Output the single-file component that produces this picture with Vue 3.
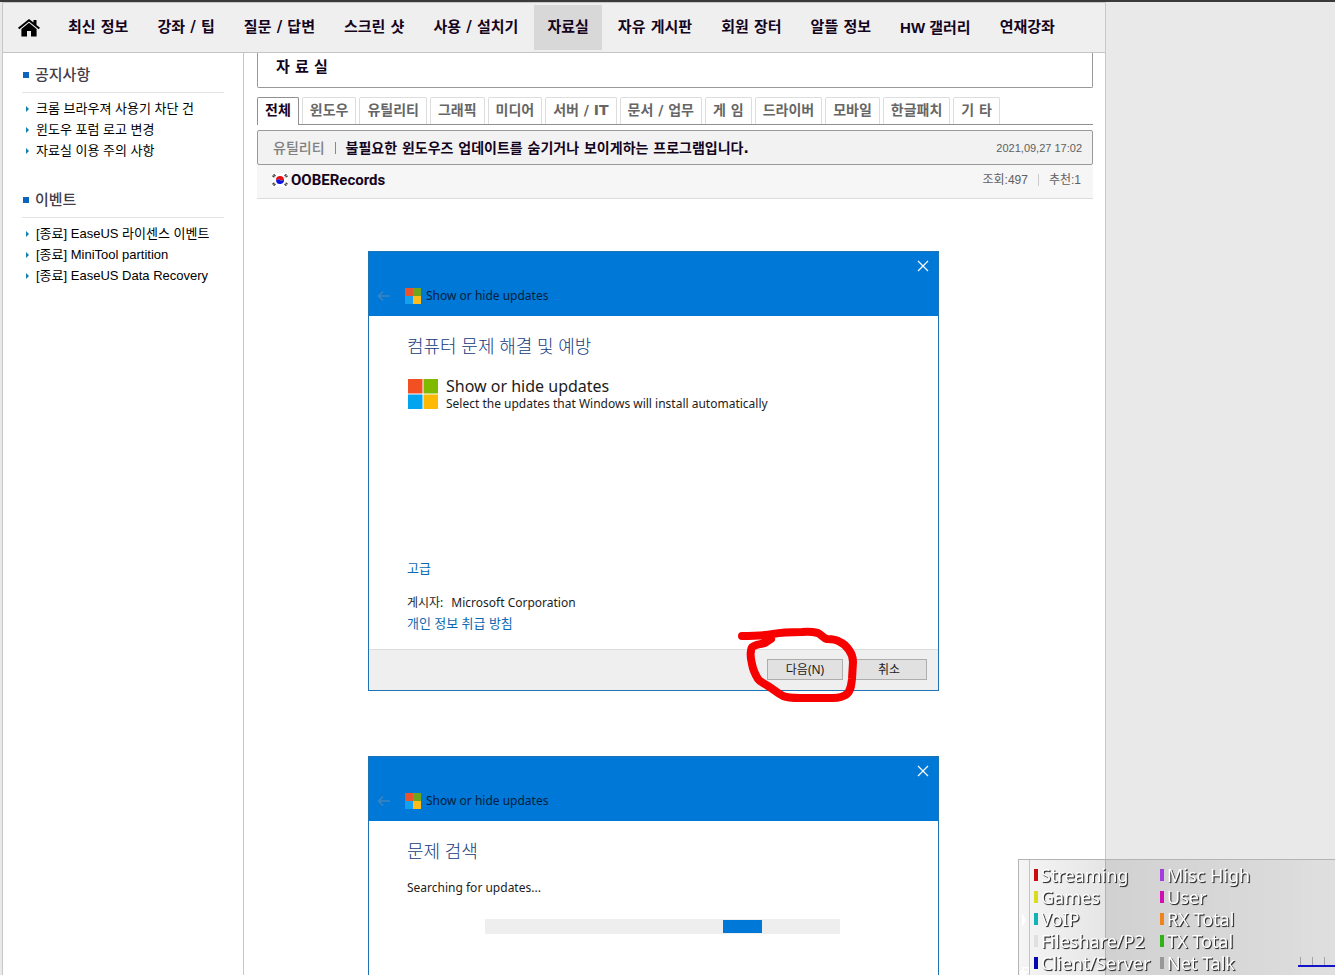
<script setup>
const navItems = [
  { label: '최신 정보' },
  { label: '강좌 / 팁' },
  { label: '질문 / 답변' },
  { label: '스크린 샷' },
  { label: '사용 / 설치기' },
  { label: '자료실', active: true },
  { label: '자유 게시판' },
  { label: '회원 장터' },
  { label: '알뜰 정보' },
  { label: 'HW 갤러리', latin: true },
  { label: '연재강좌' },
]

const sections = [
  {
    title: '공지사항',
    links: ['크롬 브라우져 사용기 차단 건', '윈도우 포럼 로고 변경', '자료실 이용 주의 사항'],
  },
  {
    title: '이벤트',
    links: ['[종료] EaseUS 라이센스 이벤트', '[종료] MiniTool partition', '[종료] EaseUS Data Recovery'],
  },
]

const tabs = [
  '전체', '윈도우', '유틸리티', '그래픽', '미디어', '서버 / IT',
  '문서 / 업무', '게 임', '드라이버', '모바일', '한글패치', '기 타',
]

const dialogs = [
  { id: 'intro', title: '컴퓨터 문제 해결 및 예방' },
  { id: 'search', title: '문제 검색' },
]

const legend = [
  { label: 'Streaming', color: '#cc0c0c' },
  { label: 'Games', color: '#d8dc1c' },
  { label: 'VoIP', color: '#10b4b4' },
  { label: 'Fileshare/P2', color: '#e0e0e0' },
  { label: 'Client/Server', color: '#0404b0' },
  { label: 'Misc High', color: '#a23cdc' },
  { label: 'User', color: '#d00cb4' },
  { label: 'RX Total', color: '#f0841c' },
  { label: 'TX Total', color: '#30b414' },
  { label: 'Net Talk', color: '#989898' },
]
</script>

<template>
  <div class="page">
    <div class="site">
      <header class="top">
        <a class="home" href="#" aria-label="홈">
          <svg width="22" height="18" viewBox="0 0 22 18">
            <path d="M11 0 L15.5 3.6 V1 H18.5 V6 L22 8.8 L20.7 10.3 L11 2.4 L1.3 10.3 L0 8.8 Z" />
            <path d="M11 3.8 L18.6 10 V17.6 H13 V12 H9 V17.6 H3.4 V10 Z" />
          </svg>
        </a>
        <nav class="nav">
          <a
            v-for="item in navItems"
            :key="item.label"
            href="#"
            :class="{ active: item.active, latin: item.latin }"
          >{{ item.label }}</a>
        </nav>
      </header>

      <div class="columns">
        <aside class="side">
          <section v-for="section in sections" :key="section.title">
            <h2>{{ section.title }}</h2>
            <ul>
              <li v-for="link in section.links" :key="link"><a href="#">{{ link }}</a></li>
            </ul>
          </section>
        </aside>

        <main class="content">
          <h1 class="board">자 료 실</h1>

          <nav class="tabs">
            <a v-for="(tab, i) in tabs" :key="tab" href="#" :class="{ current: i === 0 }">{{ tab }}</a>
          </nav>

          <article>
            <header class="post-head">
              <a class="category" href="#">유틸리티</a>
              <span class="bar"></span>
              <h2>불필요한 윈도우즈 업데이트를 숨기거나 보이게하는 프로그램입니다.</h2>
              <time>2021,09,27 17:02</time>
            </header>
            <div class="post-meta">
              <svg class="flag" width="16" height="14" viewBox="0 0 16 14">
                <rect width="16" height="14" fill="#fff" />
                <path d="M4 7.5a4 4 0 0 1 8-1q-2 2-4 .5t-4 .5z" fill="#e80c0c" />
                <path d="M4 7.5a4 4 0 0 0 8-1q-2 2-4 .5t-4 .5z" fill="#0c14e0" />
                <path d="M1 4L3 1.6M13 1.6L15 4M1 10L3 12.4M13 12.4L15 10" stroke="#444" stroke-width="2.6" stroke-dasharray="1.4 .4" />
              </svg>
              <a class="author" href="#">OOBERecords</a>
              <span class="stat">조회:497</span>
              <span class="bar light"></span>
              <span>추천:1</span>
            </div>

            <div class="shots">
              <section v-for="d in dialogs" :key="d.id" class="dialog" :class="d.id">
                <header class="dialog-head">
                  <button class="close" type="button" aria-label="닫기">
                    <svg width="12" height="12" viewBox="0 0 12 12">
                      <path d="M1 1L11 11M11 1L1 11" stroke="#fff" stroke-width="1.2" />
                    </svg>
                  </button>
                  <div class="dialog-name">
                    <svg class="back" width="14" height="12" viewBox="0 0 14 12">
                      <path d="M13 6H1.5M6 1.5L1.5 6L6 10.5" fill="none" stroke="#3c84c0" stroke-width="1.6" />
                    </svg>
                    <svg width="16" height="16" viewBox="0 0 16 16">
                      <rect width="8" height="8" fill="#e8542c" />
                      <rect x="8" width="8" height="8" fill="#6fa51c" />
                      <rect y="8" width="8" height="8" fill="#14a0ee" />
                      <rect x="8" y="8" width="8" height="8" fill="#fcbc1c" />
                    </svg>
                    <span>Show or hide updates</span>
                  </div>
                </header>

                <div class="dialog-body">
                  <h3>{{ d.title }}</h3>
                  <template v-if="d.id === 'intro'">
                    <div class="app">
                      <svg width="30" height="30" viewBox="0 0 30 30">
                        <rect width="14.5" height="14.5" fill="#f25022" />
                        <rect x="15.5" width="14.5" height="14.5" fill="#7fba00" />
                        <rect y="15.5" width="14.5" height="14.5" fill="#00a4ef" />
                        <rect x="15.5" y="15.5" width="14.5" height="14.5" fill="#ffb900" />
                      </svg>
                      <div>
                        <strong>Show or hide updates</strong>
                        <p>Select the updates that Windows will install automatically</p>
                      </div>
                    </div>
                    <a class="advanced" href="#">고급</a>
                    <p class="publisher"><span>게시자:</span><span>Microsoft Corporation</span></p>
                    <a class="privacy" href="#">개인 정보 취급 방침</a>
                  </template>
                  <template v-else>
                    <p class="status">Searching for updates...</p>
                    <div class="progress" role="progressbar" aria-label="Searching for updates">
                      <div class="chunk"></div>
                    </div>
                  </template>
                </div>

                <footer v-if="d.id === 'intro'" class="dialog-foot">
                  <button type="button">다음(N)</button>
                  <button type="button">취소</button>
                  <svg class="marker" width="124" height="77" viewBox="0 0 124 77">
                    <path
                      d="M7 10C17 10 28 10 38 8C48 6 58 6 67 6C74 5 79 6 83 7C87 9 88 12 92 13C97 13 102 14 105 16C110 18 112 21 114 24C117 28 118 32 118 36L117 53C116 60 116 64 112 68C108 71 104 72 98 72H65C58 72 53 72 48 70C42 67 38 63 33 60C29 57 25 56 23 53C20 48 18 44 17 38C16 34 15 29 16 25C16 21 17 21 19 20C23 18 27 18 30 17L36 13"
                      fill="none" stroke="#f60000" stroke-width="8" stroke-linecap="round" stroke-linejoin="round"
                    />
                  </svg>
                </footer>
              </section>
            </div>
          </article>
        </main>
      </div>
    </div>

    <aside class="monitor">
      <div class="grip">
        <svg class="grip-arrow" width="4" height="14" viewBox="0 0 4 14"><path d="M0 0L4 7L0 14Z" fill="#fff" /></svg>
        <svg width="9" height="8" viewBox="0 0 9 8">
          <path d="M3 .5H8.500V5H3ZM1 3V7H6" fill="none" stroke="#fff" stroke-width="1.4" />
        </svg>
      </div>
      <ul class="legend">
        <li v-for="item in legend" :key="item.label">
          <i :style="{ background: item.color }"></i>{{ item.label }}
        </li>
      </ul>
      <div class="graph">
        <svg width="37" height="12" viewBox="0 0 37 12">
          <path d="M2.500 1V9M14.500 1V9M26.500 1V9" stroke="#a4a4a4" />
          <path d="M0 10H37" stroke="#1414c8" stroke-width="2" />
        </svg>
      </div>
    </aside>
  </div>
</template>

<style>
body {
  margin: 0;
  background: #e9e9e9;
}
</style>

<style scoped>
* {
  box-sizing: border-box;
}
h1, h2, h3, p, ul {
  margin: 0;
  padding: 0;
  font-size: inherit;
}
ul {
  list-style: none;
}
a {
  color: inherit;
  text-decoration: none;
}
button {
  font: inherit;
  color: inherit;
}
svg {
  display: block;
  flex: none;
}
.page {
  height: 100vh;
  overflow: hidden;
  border-top: 2px solid #3a3a3a;
  background: #e9e9e9;
  color: #14041c;
  font-family: "DejaVu Sans", "Noto Sans CJK KR", sans-serif;
  font-size: 13px;
  line-height: 20px;
}
.site {
  display: flex;
  flex-direction: column;
  min-height: 100%;
  max-width: 1104px;
  margin-left: 2px;
  border: 1px solid #c8c8c8;
  border-width: 1px 1px 0;
  background: #fff;
}
.top {
  display: flex;
  align-items: center;
  height: 50px;
  padding: 0 37px 0 15px;
  border-bottom: 1px solid #c4c4c4;
  background: #efefef;
}
.home {
  margin-right: 15px;
  fill: #000;
}
.nav {
  display: flex;
  flex: 1;
  justify-content: space-between;
  font-size: 15px;
  font-weight: bold;
  white-space: nowrap;
}
.nav a {
  padding: 0 13px;
  line-height: 45px;
}
.nav .active {
  background: #d8d8d8;
}
.nav .latin {
  font-family: "Liberation Sans", "Noto Sans CJK KR", sans-serif;
}
.columns {
  display: flex;
  flex: 1;
}
.side {
  width: 241px;
  flex: none;
  padding: 12px 19px;
  border-right: 1px solid #c8c8c8;
}
.side h2 {
  display: flex;
  align-items: center;
  gap: 6px;
  height: 28px;
  padding: 0 1px 8px;
  border-bottom: 1px solid #e4e4e4;
  color: #443c48;
  font-size: 15px;
  font-weight: 500;
}
.side h2::before {
  width: 6px;
  height: 6px;
  background: #0c64bc;
  content: "";
}
.side ul {
  margin: 5px 0 29px;
  font-family: "Liberation Sans", "Noto Sans CJK KR", sans-serif;
  color: #000;
}
.side li {
  display: flex;
  align-items: center;
  gap: 7px;
  padding-left: 4px;
  line-height: 21px;
  white-space: nowrap;
}
.side li::before {
  border: 3px solid transparent;
  border-right-width: 0;
  border-left-color: #1080ac;
  content: "";
}
.content {
  flex: 1;
  min-width: 0;
  padding: 0 12px 0 13px;
}
.board {
  height: 35px;
  padding: 4px 18px;
  border: 1px solid #999;
  border-top: 0;
  border-radius: 0 0 2px 2px;
  font-size: 15px;
}
.tabs {
  display: flex;
  gap: 3px;
  margin-top: 9px;
  border-bottom: 1px solid #909090;
  color: #666;
  font-size: 14px;
  font-weight: bold;
  white-space: nowrap;
}
.tabs a {
  height: 27px;
  padding: 0 7px;
  border: 1px solid #ddd;
  border-bottom: 0;
  border-radius: 2px 2px 0 0;
  line-height: 24px;
}
.tabs .current {
  margin-bottom: -1px;
  height: 28px;
  border-color: #909090;
  background: #fff;
  color: #14041c;
}
.post-head {
  display: flex;
  align-items: center;
  height: 35px;
  margin-top: 5px;
  padding: 0 10px 0 15px;
  border: 1px solid #999;
  border-radius: 2px;
  background: #f2f2f2;
  font-size: 14px;
}
.category {
  color: #808080;
  font-weight: 500;
}
.bar {
  width: 1px;
  height: 12px;
  margin: 0 10px;
  background: #888;
}
.bar.light {
  background: #ccc;
}
.post-head time,
.post-meta {
  color: #606060;
  font-family: "Liberation Sans", "Noto Sans CJK KR", sans-serif;
}
.post-head time {
  margin-left: auto;
  font-size: 11px;
}
.post-meta {
  display: flex;
  align-items: center;
  height: 34px;
  padding: 0 12px 4px 15px;
  border-bottom: 1px solid #dcdcdc;
  background: #f6f6f6;
  font-size: 12px;
}
.author {
  margin: 0 auto 0 3px;
  color: #14041c;
  font-family: Roboto, sans-serif;
  font-size: 15px;
  font-weight: bold;
}
.shots {
  display: flex;
  flex-direction: column;
  gap: 65px;
  max-width: 571px;
  margin: 52px 0 0 111px;
}
.dialog {
  border: 1px solid #1c74b4;
  background: #fff;
  color: #1c1c1c;
  font-family: "Noto Sans", "Noto Sans CJK KR", sans-serif;
  font-size: 12px;
}
.dialog-head {
  display: flex;
  flex-direction: column;
  height: 64px;
  background: #0078d7;
  color: #04203c;
}
.dialog-name {
  display: flex;
  align-items: center;
  gap: 5px;
  margin-top: 14px;
  padding-left: 8px;
}
.back {
  margin-right: 9px;
}
.close {
  align-self: flex-end;
  margin: 8px 9px 0 0;
  padding: 0;
  border: 0;
  background: none;
}
.dialog-body {
  display: flex;
  flex-direction: column;
  align-items: flex-start;
  min-height: 333px;
  padding: 18px 38px 0;
}
.dialog-body h3 {
  color: #143c80;
  font-size: 18px;
  font-weight: 300;
  line-height: 24px;
}
.app {
  display: flex;
  align-items: center;
  gap: 8px;
  margin: 18px 0 0 1px;
}
.app strong {
  display: block;
  font-size: 16px;
  font-weight: 400;
  line-height: 20px;
}
.app p {
  line-height: 16px;
}
.dialog-body a {
  color: #0c68b0;
  font-size: 13px;
}
.advanced {
  margin-top: 146px;
}
.publisher {
  display: flex;
  gap: 8px;
  margin-top: 15px;
}
.dialog-foot {
  position: relative;
  display: flex;
  justify-content: flex-end;
  gap: 8px;
  padding: 9px 11px 10px;
  border-top: 1px solid #dcdcdc;
  background: #efefef;
}
.dialog-foot button {
  width: 76px;
  height: 21px;
  padding: 0;
  border: 1px solid #adadad;
  background: #e1e1e1;
  line-height: 18px;
}
.marker {
  position: absolute;
  right: 79px;
  bottom: -13px;
}
.status {
  margin-top: 15px;
}
.progress {
  width: 355px;
  max-width: 100%;
  margin: 21px 0 0 78px;
  padding: 1px 0;
  background: #eee;
}
.chunk {
  width: 11%;
  height: 13px;
  margin-left: 67%;
  background: #0078d7;
}
.monitor {
  position: fixed;
  right: 0;
  bottom: 0;
  display: flex;
  width: 317px;
  height: 116px;
  border: 1px solid #b4b4b4;
  border-width: 1px 0 0 1px;
  background: linear-gradient(90deg, rgba(0, 0, 0, .04), rgba(0, 0, 0, .1) 28%, rgba(0, 0, 0, .06) 85%, rgba(0, 0, 0, .04));
}
.grip {
  display: flex;
  flex-direction: column;
  justify-content: flex-end;
  align-items: center;
  gap: 40px;
  width: 11px;
  border-right: 1px solid #c4c4c4;
}
.legend {
  display: grid;
  grid-template-columns: 126px 126px;
  grid-template-rows: repeat(5, 22px);
  grid-auto-flow: column;
  padding: 4px 0 0 4px;
  color: #fff;
  font-family: "Noto Sans", sans-serif;
  font-size: 18px;
  text-shadow: 1px 1px 1px #303030, 1px 1px 0 #505050;
  white-space: nowrap;
}
.legend li {
  display: flex;
  align-items: center;
  gap: 3px;
}
.legend i {
  width: 4px;
  height: 12px;
}
.graph {
  display: flex;
  flex: 1;
  align-items: flex-end;
  justify-content: flex-end;
  padding-bottom: 7px;
}
</style>
